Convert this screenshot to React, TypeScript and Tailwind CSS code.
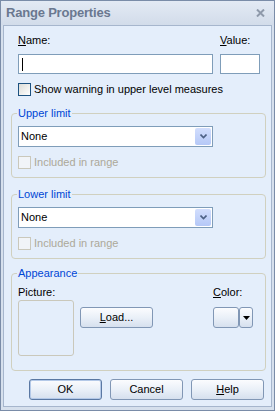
import type { ReactNode } from 'react'

function Checkbox({ disabled }: { disabled?: boolean }) {
  return (
    <span
      className={`block w-[13px] h-[13px] shrink-0 border ${
        disabled
          ? 'border-[#cac8bb] bg-[#f1f4f8]'
          : 'border-[#1c5180] bg-gradient-to-br from-[#dcdcd7] to-[#ffffff]'
      }`}
    />
  )
}

function Group({ title, children, className = '' }: { title: string; children: ReactNode; className?: string }) {
  return (
    <fieldset className={`ml-[7px] w-[255px] border border-[#d0d0bf] rounded-[4px] pl-[6px] ${className}`}>
      <legend className="-ml-px px-px text-[#0046d5] leading-[13px]">{title}</legend>
      {children}
    </fieldset>
  )
}

function Select() {
  return (
    <div className="mt-[6px] w-[195px] h-[21px] border border-[#7f9db9] bg-white flex items-center">
      <span className="flex-1 pl-[2px] text-black leading-[13px]">None</span>
      <span className="w-[16px] h-[17px] mr-px flex items-center justify-center rounded-[2px] bg-gradient-to-b from-[#d2defd] to-[#b5c8f7]">
        <svg width="7" height="5" viewBox="0 0 7 5">
          <path d="M0.5 0.5 L3.5 3.5 L6.5 0.5" fill="none" stroke="#4d6185" strokeWidth="1.6" />
        </svg>
      </span>
    </div>
  )
}

function Included() {
  return (
    <div className="mt-[9px] flex items-center gap-[3px]">
      <Checkbox disabled />
      <span className="text-[#aca899] leading-[13px]">Included in range</span>
    </div>
  )
}

function Button({ children, width, def, className = '' }: { children?: ReactNode; width: string; def?: boolean; className?: string }) {
  return (
    <button
      className={`${width} h-[21px] border rounded-[3px] bg-gradient-to-b from-[#fbfcfe] via-[#eaf0f8] to-[#d6e0ee] text-black leading-[13px] flex items-center justify-center ${
        def ? 'border-[#5a78a3] shadow-[inset_0_0_0_1px_#b4c9e8]' : 'border-[#8197b5]'
      } ${className}`}
    >
      {children}
    </button>
  )
}

export default function App() {
  return (
    <div className="w-[275px] h-[411px] bg-[#d6e0ed] border border-[#7a8ca8] flex flex-col font-['Liberation_Sans',Arial,sans-serif] text-[11px] select-none">
      <div className="h-[24px] shrink-0 flex items-center justify-between pl-[5px] pr-[9px] bg-gradient-to-b from-[#e3eaf4] to-[#d2dcea]">
        <span className="font-bold text-[13px] text-[#6a7890] tracking-[-0.2px]">Range Properties</span>
        <svg width="9" height="8" viewBox="0 0 9 8">
          <path d="M1 0.5 L8 7.5 M8 0.5 L1 7.5" stroke="#8e99aa" strokeWidth="2" />
        </svg>
      </div>
      <div className="flex-1 mx-[2px] mb-[3px] border border-[#a6b6cd] bg-[#e4eefb] flex flex-col pt-[8px]">
        <div className="flex pl-[14px]">
          <div className="w-[202px]">
            <span className="leading-[13px] block">
              <span className="underline">N</span>ame:
            </span>
            <div className="mt-[7px] w-[195px] h-[20px] border border-[#7f9db9] bg-white flex items-center">
              <span className="ml-[3px] w-px h-[13px] bg-black" />
            </div>
          </div>
          <div>
            <span className="leading-[13px] block">
              <span className="underline">V</span>alue:
            </span>
            <div className="mt-[7px] w-[40px] h-[20px] border border-[#7f9db9] bg-white" />
          </div>
        </div>

        <div className="mt-[9px] pl-[14px] flex items-center gap-[3px]">
          <Checkbox />
          <span className="leading-[13px]">Show warning in upper level measures</span>
        </div>

        <Group title="Upper limit" className="mt-[11px] pb-[8px]">
          <Select />
          <Included />
        </Group>

        <Group title="Lower limit" className="mt-[10px] pb-[8px]">
          <Select />
          <Included />
        </Group>

        <Group title="Appearance" className="mt-[8px] pb-[14px]">
          <div className="mt-[6px] flex">
            <div className="w-[195px]">
              <span className="leading-[13px] block">Picture:</span>
              <div className="mt-px flex items-start">
                <div className="w-[56px] h-[56px] border border-[#cac8bb] rounded-[3px]" />
                <Button width="w-[73px]" className="ml-[6px] mt-[7px]">
                  <span className="underline">L</span>oad...
                </Button>
              </div>
            </div>
            <div>
              <span className="leading-[13px] block">
                <span className="underline">C</span>olor:
              </span>
              <div className="mt-[8px] flex">
                <Button width="w-[26px]" />
                <Button width="w-[14px]">
                  <svg width="7" height="4" viewBox="0 0 7 4">
                    <path d="M0 0 H7 L3.5 4 Z" fill="#000" />
                  </svg>
                </Button>
              </div>
            </div>
          </div>
        </Group>

        <div className="mt-[8px] ml-[25px] flex gap-[8px]">
          <Button width="w-[73px]" def>OK</Button>
          <Button width="w-[73px]">Cancel</Button>
          <Button width="w-[73px]">
            <span className="underline">H</span>elp
          </Button>
        </div>
      </div>
    </div>
  )
}
